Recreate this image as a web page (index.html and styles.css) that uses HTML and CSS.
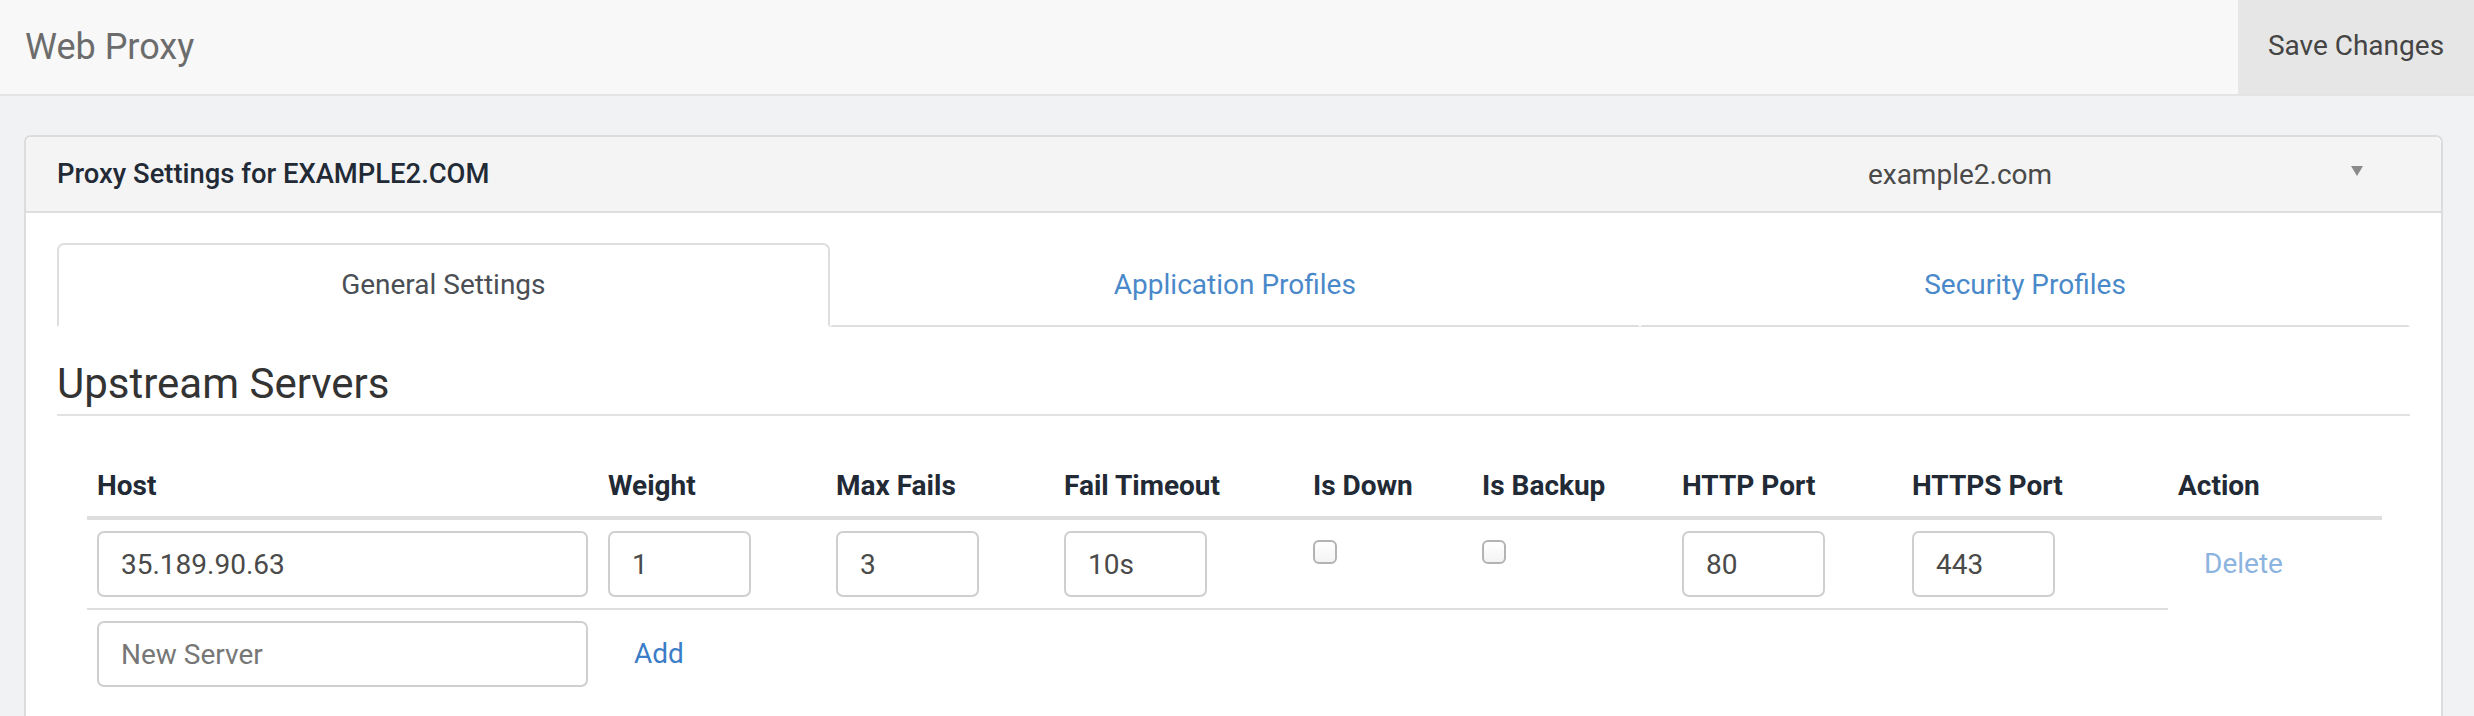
FILE: index.html
```html
<!DOCTYPE html>
<html lang="en">
<head>
<meta charset="utf-8">
<title>Web Proxy</title>
<link rel="stylesheet" href="styles.css">
</head>
<body>
<header class="topbar">
  <h1 class="page-title">Web Proxy</h1>
  <button class="save-btn" type="button">Save Changes</button>
</header>
<main class="page">
  <section class="card">
    <div class="card-header">
      <span class="card-title">Proxy Settings for EXAMPLE2.COM</span>
      <div class="domain-select">
        <span class="select-spacer"></span>
        <span class="select-value">example2.com</span>
        <span class="select-arrow-cell"><span class="select-arrow"></span></span>
      </div>
    </div>
    <div class="card-body">
      <nav class="tabs">
        <a class="tab active">General Settings</a>
        <a class="tab">Application Profiles</a>
        <a class="tab">Security Profiles</a>
      </nav>
      <h2 class="section-title">Upstream Servers</h2>
      <table class="servers">
        <colgroup>
          <col class="c-host"><col class="c-weight"><col class="c-fails"><col class="c-timeout"><col class="c-down"><col class="c-backup"><col class="c-http"><col class="c-https"><col class="c-action">
        </colgroup>
        <thead>
          <tr>
            <th>Host</th><th>Weight</th><th>Max Fails</th><th>Fail Timeout</th><th>Is Down</th><th>Is Backup</th><th>HTTP Port</th><th>HTTPS Port</th><th>Action</th>
          </tr>
        </thead>
        <tbody>
          <tr class="server-row">
            <td><input class="field" type="text" value="35.189.90.63"></td>
            <td><input class="field field-sm" type="text" value="1"></td>
            <td><input class="field field-sm" type="text" value="3"></td>
            <td><input class="field field-sm" type="text" value="10s"></td>
            <td><input class="check" type="checkbox"></td>
            <td><input class="check" type="checkbox"></td>
            <td><input class="field field-sm" type="text" value="80"></td>
            <td><input class="field field-sm" type="text" value="443"></td>
            <td class="action-cell"><a class="link link-muted">Delete</a></td>
          </tr>
          <tr class="new-row">
            <td><input class="field" type="text" placeholder="New Server"></td>
            <td><a class="link">Add</a></td>
            <td></td><td></td><td></td><td></td><td></td><td></td><td></td>
          </tr>
        </tbody>
      </table>
    </div>
  </section>
</main>
</body>
</html>
```
FILE: styles.css
```css
* { box-sizing: border-box; }
html, body { margin: 0; padding: 0; }
body {
  background: #f1f2f4;
  font-family: Roboto, "Liberation Sans", Arial, sans-serif;
  color: #222a36;
  width: 2474px;
  height: 716px;
  overflow: hidden;
}
.topbar {
  display: flex;
  align-items: stretch;
  height: 96px;
  background: #f8f8f8;
  border-bottom: 2px solid #e4e4e4;
}
.page-title {
  flex: 1;
  margin: 0;
  padding-left: 25px;
  display: flex;
  align-items: center;
  font-size: 36px;
  font-weight: 400;
  color: #6c6c6c;
}
.save-btn {
  width: 236px;
  border: 0;
  margin: 0;
  background: #e6e6e6;
  font-family: inherit;
  font-size: 28px;
  color: #444;
  padding: 0 0 4px;
}
.page {
  padding: 39px 31px 0 24px;
}
.card {
  background: #fff;
  border: 2px solid #dcdcdc;
  border-radius: 7px;
  min-height: 700px;
}
.card-header {
  display: flex;
  align-items: center;
  height: 76px;
  padding: 0 31px;
  background: #f4f4f5;
  border-bottom: 2px solid #dedede;
  border-radius: 7px 7px 0 0;
}
.card-title {
  font-size: 27.4px;
  font-weight: 500;
  color: #222a36;
}
.domain-select {
  margin-left: auto;
  width: 900px;
  display: grid;
  grid-template-columns: 1fr auto 1fr;
  align-items: center;
  font-size: 28px;
  color: #4a4a4a;
}
.select-arrow-cell {
  display: flex;
  justify-content: flex-end;
  padding-right: 47px;
}
.select-arrow {
  width: 0;
  height: 0;
  border-left: 6px solid transparent;
  border-right: 6px solid transparent;
  border-top: 10px solid #8a8a8a;
  margin-top: -6px;
}
.card-body {
  padding: 30px 31px;
}
.tabs {
  display: flex;
}
.tab {
  flex: 1 1 auto;
  text-align: center;
  line-height: 80px;
  font-size: 28px;
  color: #4a89c9;
  border: 2px solid transparent;
  border-bottom-color: #dedede;
  border-radius: 7px 7px 0 0;
}
.tab.active {
  color: #4b4f55;
  border-color: #dedede;
  border-bottom-color: transparent;
}
.section-title {
  margin: 32px 0 0;
  padding-bottom: 5px;
  line-height: 50px;
  font-size: 42px;
  font-weight: 400;
  color: #333;
  border-bottom: 2px solid #e2e2e2;
}
.servers {
  margin: 36px 0 0 30px;
  width: 2295px;
  table-layout: fixed;
  border-collapse: collapse;
}
.c-host { width: 511px; }
.c-weight { width: 228px; }
.c-fails { width: 228px; }
.c-timeout { width: 249px; }
.c-down { width: 169px; }
.c-backup { width: 200px; }
.c-http { width: 230px; }
.c-https { width: 266px; }
.c-action { width: 214px; }
.servers th {
  text-align: left;
  padding: 14px 10px 10px;
  line-height: 40px;
  font-size: 28px;
  font-weight: 700;
  color: #222a36;
  border-bottom: 4px solid #dedede;
}
.servers td {
  padding: 11px 10px;
  vertical-align: top;
}
.server-row td { border-bottom: 2px solid #dedede; }
.server-row td.action-cell { border-bottom: 0; }
.field {
  display: block;
  width: 100%;
  height: 66px;
  margin: 0;
  padding: 0 22px;
  border: 2px solid #cfcfcf;
  border-radius: 7px;
  background: #fff;
  font-family: inherit;
  font-size: 28px;
  color: #4a4a4a;
}
.field::placeholder { color: #777; opacity: 1; }
.field-sm { width: 143px; }
.check {
  appearance: none;
  -webkit-appearance: none;
  display: block;
  width: 24px;
  height: 24px;
  margin: 9px 0 0 0;
  border: 2px solid #b3b3b3;
  border-radius: 6px;
  background: linear-gradient(#ffffff, #f3f3f3);
}
.link {
  display: block;
  padding-left: 26px;
  line-height: 66px;
  font-size: 28px;
  color: #3b7dc6;
}
.link-muted { color: #8cb4df; }
```
